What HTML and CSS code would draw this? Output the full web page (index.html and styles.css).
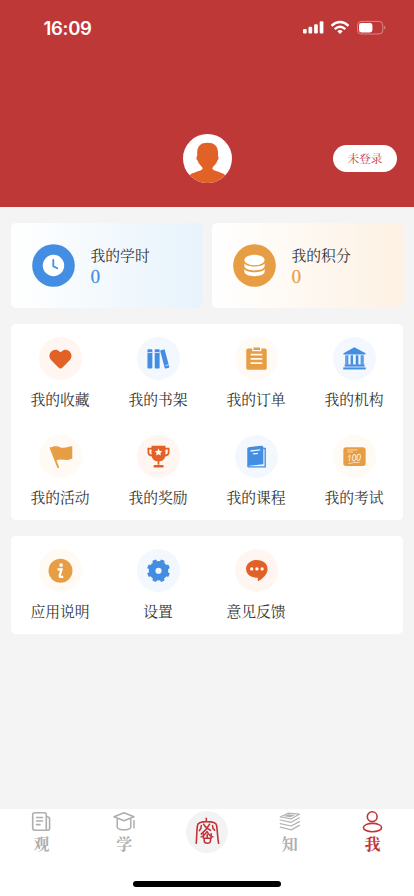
FILE: index.html
```html
<!DOCTYPE html>
<html lang="zh-CN">
<head>
<meta charset="utf-8">
<meta name="viewport" content="width=device-width, initial-scale=1">
<title>我的</title>
<link rel="stylesheet" href="styles.css">
</head>
<body>
<div class="app">
  <header class="header">
    <div class="status">
      <span class="time">16:09</span>
      <svg class="status-icons" width="84" height="16" viewBox="0 0 84 16" fill="#fff">
        <rect x="0" y="9" width="3.7" height="4.6" rx="1.1"/><rect x="5.5" y="6.8" width="3.7" height="6.8" rx="1.1"/><rect x="11.1" y="4.2" width="3.7" height="9.4" rx="1.1"/><rect x="16.7" y="1.2" width="3.7" height="12.4" rx="1.1"/>
        <g fill="none" stroke="#fff" stroke-width="2.4"><path d="M28.5 5.9Q37 -1.8 45.5 5.9"/><path d="M31.7 9.2Q37 4.5 42.3 9.2"/></g>
        <path d="M34.3 11.2Q37 9 39.7 11.2L37 13.9Z"/>
        <rect x="54.5" y="1.4" width="25.3" height="12.6" rx="3.8" fill="none" stroke="#fff" stroke-opacity=".4"/>
        <rect x="56" y="2.9" width="13.4" height="9.6" rx="2.4"/>
        <path d="M81.2 5.8Q83.8 7.7 81.2 9.6Z" fill-opacity=".45"/>
      </svg>
    </div>
    <div class="profile">
      <svg class="avatar" width="49" height="49" viewBox="0 0 49 49">
        <defs><clipPath id="round"><circle cx="24.5" cy="24.5" r="24.5"/></clipPath></defs>
        <circle cx="24.5" cy="24.5" r="24.5" fill="#fff"/>
        <path clip-path="url(#round)" fill="#e26127" d="M24.5 8.8C31 8.8 35 12 35 18.5V22.2C36 22.6 35.6 25.8 34.4 26.6C33.6 29.5 31.8 31 30 33C29 34.8 29.3 35.4 31 36.2C34.6 37.8 40 38.7 42 41V49H7V41C9 38.7 14.4 37.8 18 36.2C19.7 35.4 20 34.8 19 33C17.2 31 15.4 29.5 14.6 26.6C13.4 25.8 13 22.6 14.2 22.2V18.5C14.2 12 18 8.8 24.5 8.8Z"/>
      </svg>
      <span class="login">未登录</span>
    </div>
  </header>

  <main class="content">
    <section class="stats">
      <div class="stat stat-blue">
        <svg width="43" height="43" viewBox="0 0 43 43"><circle cx="21.5" cy="21.5" r="21.3" fill="#438de2"/><circle cx="21.5" cy="21.5" r="10.7" fill="#fff"/><path d="M21.3 15.8V22.3L25.2 24.3" fill="none" stroke="#438de2" stroke-width="1.8" stroke-linecap="round"/></svg>
        <div class="stat-text"><span>我的学时</span><b>0</b></div>
      </div>
      <div class="stat stat-gold">
        <svg width="43" height="43" viewBox="0 0 43 43"><circle cx="21.5" cy="21.5" r="21.3" fill="#e69d43"/><g fill="#fff"><ellipse cx="21.5" cy="16" rx="10.2" ry="5.2"/><path d="M11.3 19.2C14 23.6 29 23.6 31.7 19.2V21.8C31.7 28 11.3 28 11.3 21.8Z"/><path d="M11.3 25C14 29.4 29 29.4 31.7 25V27.6C31.7 33.8 11.3 33.8 11.3 27.6Z"/></g></svg>
        <div class="stat-text"><span>我的积分</span><b>0</b></div>
      </div>
    </section>

    <section class="panel">
      <div class="item"><span class="disc red"><svg viewBox="0 0 42 42"><path fill="#e26127" d="M21 30.8Q19.8 30.8 19 29.9L12 22.8C6.5 17 14.7 9 20 14.2Q21 15.2 22 14.2C27.3 9 35.5 17 30 22.8L23 29.9Q22.2 30.8 21 30.8Z"/></svg></span><span class="label">我的收藏</span></div>
      <div class="item"><span class="disc blue"><svg viewBox="0 0 42 42"><g fill="#438de2"><rect x="10.2" y="12" width="4.8" height="18.8" rx=".8"/><rect x="17.3" y="12" width="4.8" height="18.8" rx=".8"/><rect x="24.8" y="12.2" width="4.6" height="18.5" rx=".8" transform="rotate(-15 27 21.4)"/></g><path d="M10.2 15.2H15M17.3 15.2H22.1M28 27.9L31 27.1" stroke="#f2f8fe" stroke-width=".8"/></svg></span><span class="label">我的书架</span></div>
      <div class="item"><span class="disc gold"><svg viewBox="0 0 42 42"><rect x="11" y="11.3" width="20" height="20.7" rx="1.8" fill="#e69d43"/><path d="M16.8 10.5V13.9H25.7V10.5" fill="#fffaf4"/><rect x="18" y="10.2" width="6.5" height="2.6" rx=".6" fill="#e69d43"/><path d="M15.2 17.3H26.7M15.2 21.4H26.7M15.2 25.6H26.7" stroke="#fff6e8" stroke-width="1.7"/></svg></span><span class="label">我的订单</span></div>
      <div class="item"><span class="disc blue"><svg viewBox="0 0 42 42"><g fill="#438de2"><path d="M20.9 10L31.8 15.8V17H10.2V15.8Z"/><path d="M12 17.8H15V27H12ZM17.2 17.8H19.6V27H17.2ZM22.2 17.8H24.8V27H22.2ZM27 17.8H30V27H27Z"/><rect x="11.4" y="26.8" width="19.4" height="2.1"/><rect x="10" y="29.7" width="22" height="2"/></g><path d="M13.5 18V26.8M28.4 18V26.8" stroke="#9dc8f5" stroke-width=".6"/></svg></span><span class="label">我的机构</span></div>
      <div class="item"><span class="disc gold"><svg viewBox="0 0 42 42"><path d="M11.3 12.7L18.7 31.4" stroke="#e69d43" stroke-width="1.8" stroke-linecap="round"/><path fill="#e69d43" d="M11.8 12.2C15.5 10.2 18.5 11.2 21 12.1C24.5 13.3 29 11.6 32.5 10.8V22.8C28 26.5 22 22 16.6 24.9Z"/></svg></span><span class="label">我的活动</span></div>
      <div class="item"><span class="disc red"><svg viewBox="0 0 42 42"><g fill="none" stroke="#e26127" stroke-width="1.7"><path d="M15 13.2H11.1V17Q11.3 20 15.2 20.1M27 13.2H30.9V17Q30.7 20 26.8 20.1"/><path d="M21 24V29"/></g><path fill="#e26127" d="M14.2 10.6H27.8V19C27.8 23.3 24.8 25.8 21 25.8S14.2 23.3 14.2 19Z"/><rect x="16.2" y="29.4" width="9.8" height="2.4" rx=".9" fill="#e26127"/><path fill="#fff" d="M21 13.2L22.1 15.6 24.7 15.8 22.8 17.5 23.3 20.1 21 18.8 18.7 20.1 19.2 17.5 17.3 15.8 19.9 15.6Z"/></svg></span><span class="label">我的奖励</span></div>
      <div class="item"><span class="disc blue"><svg viewBox="0 0 42 42"><path fill="#438de2" d="M13.3 12L25.8 10.4Q27.7 10.2 27.7 12V28.6L12 30.2V13.3Q12 12.2 13.3 12Z"/><path d="M27.5 13.2H29.5V31.2H14Q12.3 31.2 12.5 29.6" fill="none" stroke="#438de2" stroke-width="1.3"/><path d="M15.2 15.6L24.6 14.5M17.5 18.5L22.4 17.9" stroke="#eef7ff" stroke-width="1.3"/></svg></span><span class="label">我的课程</span></div>
      <div class="item"><span class="disc gold"><svg viewBox="0 0 42 42"><rect x="10.1" y="12" width="21.8" height="18.4" rx="2.7" fill="#e69d43"/><path d="M14 14.6H24M14 16.6H19.5M15 28.2Q20 26.2 26 26.7" stroke="#fff0d9" stroke-width=".7" fill="none"/><text class="score" x="13.4" y="25.4" textLength="14" transform="rotate(-5 21 22)">100</text></svg></span><span class="label">我的考试</span></div>
    </section>

    <section class="panel">
      <div class="item"><span class="disc gold"><svg viewBox="0 0 42 42"><circle cx="21" cy="21.2" r="11.7" fill="#e69d43"/><circle cx="21.6" cy="15.7" r="1.8" fill="#fff"/><path d="M18 19.8H22L20.2 26Q19.8 27.9 23.7 27" fill="none" stroke="#fff" stroke-width="2.2"/></svg></span><span class="label">应用说明</span></div>
      <div class="item"><span class="disc blue"><svg viewBox="0 0 42 42"><g fill="#438de2"><circle cx="21" cy="21.2" r="9.5"/><rect x="18.9" y="10" width="4.2" height="22.4" rx="1" transform="rotate(22.5 21 21.2)"/><rect x="18.9" y="10" width="4.2" height="22.4" rx="1" transform="rotate(67.5 21 21.2)"/><rect x="18.9" y="10" width="4.2" height="22.4" rx="1" transform="rotate(112.5 21 21.2)"/><rect x="18.9" y="10" width="4.2" height="22.4" rx="1" transform="rotate(157.5 21 21.2)"/></g><circle cx="21" cy="21.2" r="3" fill="#f2f8fe"/></svg></span><span class="label">设置</span></div>
      <div class="item"><span class="disc red"><svg viewBox="0 0 42 42"><path fill="#e26127" d="M21.3 10.8C27.5 10.8 31.8 14.7 31.8 19.2C31.8 24.7 27.5 28.5 22.3 31.7V28.2C15.6 28.2 10.8 24.8 10.8 19.4C10.8 14.5 15.5 10.8 21.3 10.8Z"/><g fill="#fff"><circle cx="16.3" cy="19.5" r="1.6"/><circle cx="21.4" cy="19.5" r="1.6"/><circle cx="26.5" cy="19.5" r="1.6"/></g></svg></span><span class="label">意见反馈</span></div>
    </section>
  </main>

  <footer class="tabbar">
    <nav class="tabs">
      <a class="tab"><svg width="24" height="22" viewBox="0 0 24 22" fill="none" stroke="#aeaeae" stroke-width="1.6" stroke-linecap="round" stroke-linejoin="round"><path d="M18 19.2H6Q3.7 19.2 3.7 17V3.8Q3.7 1.8 5.7 1.8H15.3Q17.3 1.8 17.3 3.8V17.4Q17.3 19.2 18.7 19.2Q20.6 19.2 20.6 17.2V8Q20.6 6 17.6 5.5M7.5 6.5H13.5M7.5 10H13.5M7.5 13.6H11"/></svg><span>观</span></a>
      <a class="tab"><svg width="24" height="22" viewBox="0 0 24 22" fill="none" stroke="#aeaeae" stroke-width="1.5" stroke-linecap="round" stroke-linejoin="round"><path d="M2 5.7L12 1.8L22 5.7L12 9.7ZM5.2 7.3V16.2Q6 18.8 12 18.8T18.8 16.2V7.3M22 9.5V16.8"/></svg><span>学</span></a>
      <a class="tab center"><span class="seal"><svg width="42" height="42" viewBox="0 0 42 42" fill="none" stroke="#c3343a" stroke-width="1.6" stroke-linecap="round" stroke-linejoin="round"><path d="M20.3 7.2V10.2M10.2 32.3C10.8 26 10.7 19 11.5 14.5C12 9.3 30 9.3 30.6 14.5C31.4 19 31.4 26 32.6 32.3"/><path d="M17.6 13.2Q19.3 16.8 24.5 19.3M23.6 13.2Q20.6 19 15.3 23M15.3 14.5Q15.5 17.8 13.3 19.6M26.5 14.5Q26.5 17.6 28.6 19.2"/><path d="M15.3 25.8Q17.6 25.4 21 20.6Q23.8 25.4 26.8 25.8M17.4 22.9V27.3H25.2V22.9M21.2 23.8V27M18.2 27.5V30Q18.4 32.2 21.3 32.2T24.5 30V27.5"/></svg></span></a>
      <a class="tab"><svg width="24" height="22" viewBox="0 0 24 22" fill="none" stroke="#b3b3b3" stroke-width="1.25" stroke-linecap="round" stroke-linejoin="round"><path d="M2.2 6L10 2.2L21.4 3.2L13.2 7.8ZM2.2 9L13.2 11.3L21.4 6.8M2.2 12.7L13.2 15L21.4 10.6M2.2 16.2L13.2 18.9L21.4 14.4"/><path d="M10 3.2L17 3.9L12.6 6.3L5.6 5.2Z" fill="#b3b3b3" stroke="none"/></svg><span>知</span></a>
      <a class="tab active"><svg width="24" height="22" viewBox="0 0 24 22" fill="none" stroke="#c3343a" stroke-width="1.6"><circle cx="11.2" cy="5.7" r="4.9"/><ellipse cx="11.5" cy="16.6" rx="9.1" ry="4.2"/></svg><span>我</span></a>
    </nav>
    <div class="home-bar"></div>
  </footer>
</div>
</body>
</html>
```
FILE: styles.css
```css
* { box-sizing: border-box; }

body {
  margin: 0;
  background: #f4f4f4;
  color: #333;
  font-family: "Noto Serif CJK SC", "Noto Serif SC", "Source Han Serif SC", "Noto Sans CJK SC", serif;
}

svg { display: block; flex: none; }

.app {
  width: 414px;
  height: 896px;
  display: flex;
  flex-direction: column;
  overflow: hidden;
}

.header {
  height: 207px;
  background: #bf3838;
  flex: none;
}

.status {
  display: flex;
  justify-content: space-between;
  align-items: center;
  height: 56px;
  padding: 0 27px 0 43.5px;
}

.time {
  color: #fff;
  font: 600 18.5px/22px Inter, sans-serif;
  letter-spacing: -0.3px;
}

.profile {
  display: grid;
  grid-template-columns: 1fr 49px 1fr;
  align-items: center;
  margin-top: 78px;
  padding-right: 17px;
  padding-left: 17px;
}

.avatar { grid-column: 2; }

.login {
  justify-self: end;
  width: 64px;
  height: 27px;
  border-radius: 14px;
  background: #fff;
  color: #bf3838;
  font-size: 11.7px;
  line-height: 26px;
  text-align: center;
}

.content {
  flex: 1;
  display: flex;
  flex-direction: column;
  gap: 16px;
  padding: 16px 11px 0;
}

.stats {
  display: grid;
  grid-template-columns: 1fr 1fr;
  gap: 10px;
}

.stat {
  display: flex;
  align-items: center;
  gap: 15.5px;
  height: 85px;
  padding-left: 21px;
  border-radius: 5px;
}

.stat-blue { background: linear-gradient(90deg, #fff, #e7f3fc); }
.stat-gold { background: linear-gradient(90deg, #fff, #fdf1e3); }

.stat-text {
  display: flex;
  flex-direction: column;
  font-size: 14.8px;
  line-height: 21px;
  padding-bottom: 2px;
}

.stat-text b {
  font-size: 17px;
  font-weight: 500;
  -webkit-text-stroke: 0.3px currentColor;
}

.stat-blue b { color: #438de2; }
.stat-gold b { color: #e69d43; }

.panel {
  display: grid;
  grid-template-columns: repeat(4, 1fr);
  grid-auto-rows: 98px;
  border-radius: 5px;
  background: #fff;
}

.item {
  display: flex;
  flex-direction: column;
  align-items: center;
  padding-top: 13px;
}

.disc {
  width: 43px;
  height: 43px;
  border-radius: 50%;
}

.red { background: #fff5f1; }
.blue { background: #f2f8fe; }
.gold { background: #fffaf4; }

.label {
  margin-top: 8px;
  font-size: 14.8px;
  line-height: 21px;
}

.score {
  fill: #fff8ea;
  font: italic 500 9px "Open Sans", sans-serif;
}

.tabbar {
  height: 87px;
  background: #fff;
  display: flex;
  flex-direction: column;
  align-items: center;
}

.tabs {
  display: grid;
  grid-template-columns: repeat(5, 1fr);
  width: 100%;
  height: 72px;
}

.tab {
  display: flex;
  flex-direction: column;
  align-items: center;
  padding-top: 2px;
  color: #aeaeae;
  font-size: 16px;
  font-weight: 700;
  line-height: 22px;
}

.active { color: #c3343a; }

.seal {
  width: 42px;
  height: 42px;
  border-radius: 50%;
  background: #f3f3f3;
}

.home-bar {
  width: 148px;
  height: 6px;
  border-radius: 3px;
  background: #000;
}
```
